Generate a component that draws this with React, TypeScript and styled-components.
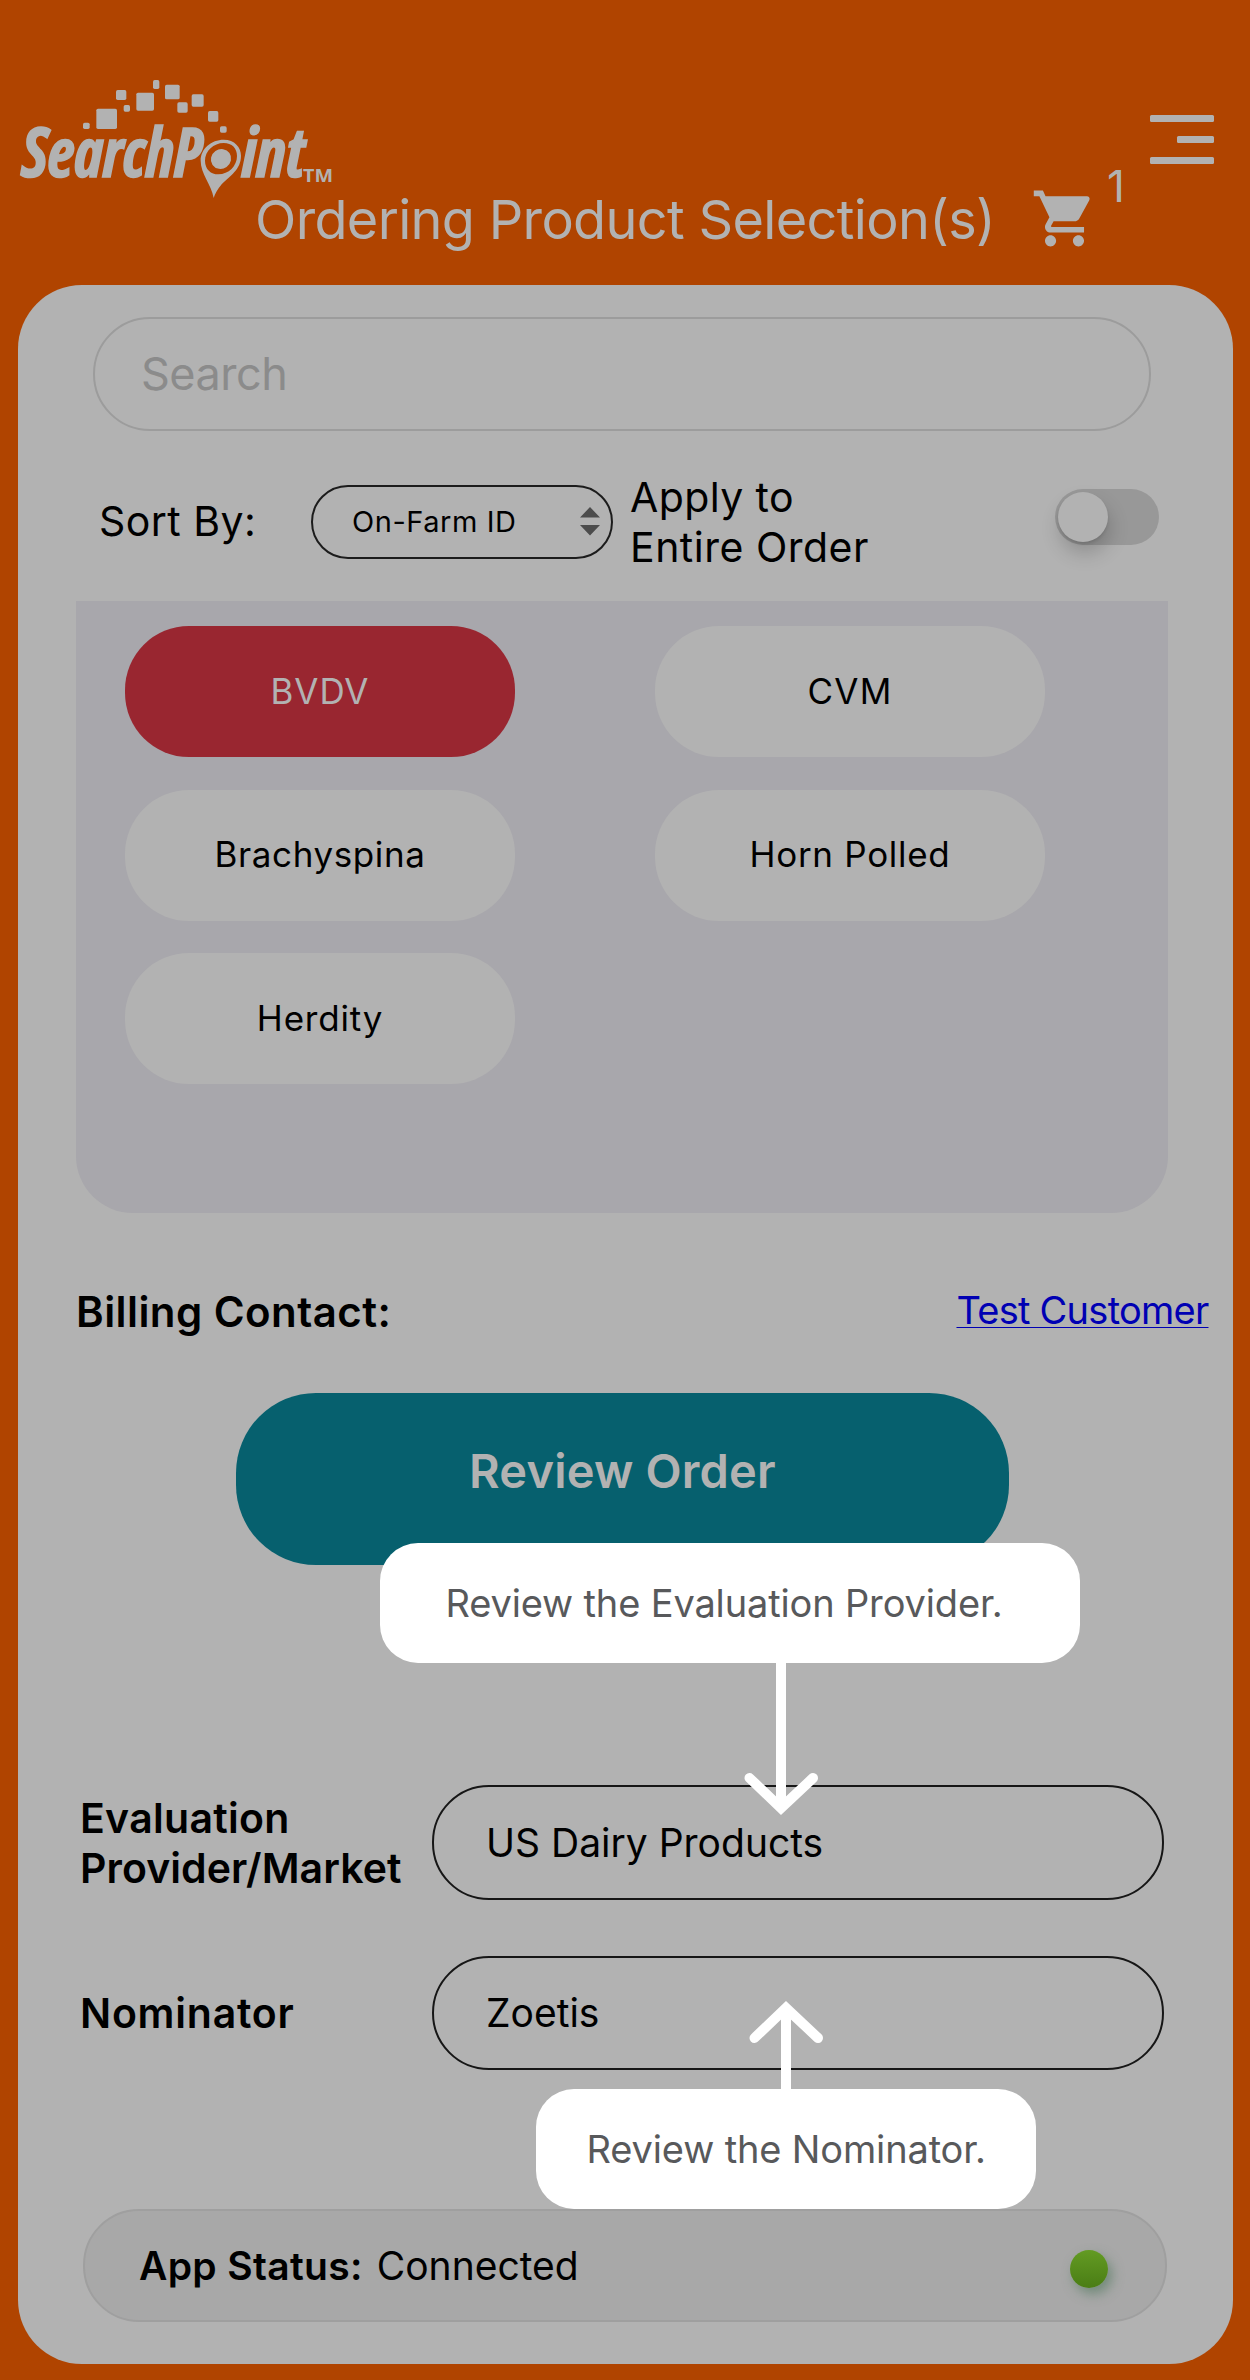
import React from 'react';
import styled, { createGlobalStyle } from 'styled-components';
import { MdShoppingCart } from 'react-icons/md';

const colors = {
  orange: '#b04400',
  surface: '#b2b2b2',
  teal: '#06606e',
  red: '#992630',
  lilac: '#a8a7ac',
  link: '#0000b3',
};

const GlobalStyle = createGlobalStyle`
  *, *::before, *::after { box-sizing: border-box; }
  body { margin: 0; background: ${colors.orange}; }
`;

const Screen = styled.div`
  position: relative;
  display: flex;
  flex-direction: column;
  width: 1250px;
  height: 2380px;
  overflow: hidden;
  background: ${colors.orange};
  color: #000;
  font-family: Inter, 'Liberation Sans', sans-serif;
`;

const Label = styled.span<{ $size: number; $weight?: number; $track?: number; $line?: number }>`
  font-size: ${p => p.$size}px;
  font-weight: ${p => p.$weight ?? 400};
  letter-spacing: ${p => p.$track ?? 0}px;
  line-height: ${p => p.$line ?? 50}px;
  white-space: nowrap;
`;

/* ---------- header ---------- */

const Header = styled.header`
  flex: none;
  height: 284.6px;
  padding-top: 60px;
  color: ${colors.surface};
`;

const BrandRow = styled.div`
  display: flex;
  justify-content: space-between;
  align-items: flex-start;
  height: 100px;
  padding-right: 36px;
`;

const Logo = styled.svg`
  flex: none;
  width: 360px;
  height: 160px;
  fill: ${colors.surface};
`;

const Wordmark = styled.text`
  font-family: 'Open Sans', sans-serif;
  font-size: 203px;
  font-stretch: condensed;
  font-style: italic;
  font-weight: 700;
  stroke: ${colors.surface};
  stroke-width: 5px;
`;

const Menu = styled.div`
  display: flex;
  flex-direction: column;
  align-items: flex-end;
  gap: 14px;
  margin-top: 55px;
`;

const MenuBar = styled.i<{ $width: number }>`
  width: ${p => p.$width}px;
  height: 7px;
  border-radius: 1.5px;
  background: ${colors.surface};
`;

const TitleRow = styled.div`
  display: flex;
  align-items: flex-start;
  padding-left: 255px;
`;

const Title = styled.h1`
  width: 775.5px;
  margin: 30px 0 0;
  font-size: 54px;
  font-weight: 400;
  line-height: 60px;
  letter-spacing: -0.66px;
  white-space: nowrap;
`;

const Cart = styled(MdShoppingCart)`
  flex: none;
  width: 67px;
  height: 67px;
  margin-top: 25px;
`;

const Count = styled.span`
  margin-left: 9.5px;
  font-size: 44px;
  font-weight: 400;
  line-height: 52px;
`;

/* ---------- panel ---------- */

const Panel = styled.main`
  flex: none;
  display: flex;
  flex-direction: column;
  align-items: flex-start;
  height: 2079px;
  margin: 0 17.5px;
  padding-top: 32.4px;
  border-radius: 64px;
  background: ${colors.surface};
`;

const SearchBox = styled.div`
  display: flex;
  align-items: center;
  width: 1058px;
  height: 114px;
  margin-left: 75.5px;
  padding-left: 46px;
  border: 2px solid #9c9c9c;
  border-radius: 57px;
  color: #8b8b8b;
`;

const Controls = styled.div`
  display: grid;
  grid-template-columns: 212px 319px 424.5px auto;
  align-items: center;
  height: 170px;
  padding: 12px 0 0 81.5px;
`;

const SortLabel = styled.div`
  display: flex;
  margin-bottom: 2px;
`;

const Select = styled.div`
  display: flex;
  align-items: center;
  justify-content: space-between;
  width: 302px;
  height: 74px;
  padding: 0 11px 0 39px;
  border: 2px solid #1c1c1c;
  border-radius: 37px;
`;

const Stacked = styled.div`
  display: flex;
  flex-direction: column;
`;

const Track = styled.div`
  display: flex;
  width: 104px;
  height: 56px;
  margin-bottom: 10px;
  padding: 3px;
  border-radius: 28px;
  background: #989898;
`;

const Knob = styled.div`
  width: 50px;
  height: 50px;
  border-radius: 50%;
  background: ${colors.surface};
  box-shadow: 0 2px 3px rgba(0, 0, 0, 0.1), 2px 11px 20px rgba(0, 0, 0, 0.2);
`;

const TestGrid = styled.section`
  display: grid;
  grid-template-columns: 390px 390px;
  grid-auto-rows: 131px;
  gap: 32.4px 140px;
  align-content: start;
  width: 1092px;
  height: 612px;
  margin-left: 58.5px;
  padding: 25.4px 0 0 49px;
  border-radius: 0 0 57px 57px;
  background: ${colors.lilac};
`;

const Pill = styled.div<{ $active?: boolean }>`
  display: flex;
  align-items: center;
  justify-content: center;
  padding-bottom: 2px;
  border-radius: 64px;
  background: ${p => (p.$active ? colors.red : colors.surface)};
  color: ${p => (p.$active ? colors.surface : '#000')};
`;

const BillingRow = styled.div`
  display: flex;
  align-items: center;
  justify-content: space-between;
  align-self: stretch;
  height: 50px;
  margin-top: 74px;
  padding: 0 24px 0 58.5px;
`;

const CustomerLink = styled.a`
  margin-bottom: 3px;
  color: ${colors.link};
  font-size: 38px;
  line-height: 50px;
  letter-spacing: -0.75px;
  text-decoration: underline;
  text-decoration-thickness: 1px;
  text-underline-offset: 3px;
  text-decoration-skip-ink: none;
`;

const ReviewButton = styled.div`
  display: flex;
  align-items: center;
  justify-content: center;
  width: 773px;
  height: 172.5px;
  margin: 56px 0 0 218.5px;
  padding-bottom: 17px;
  border-radius: 80px;
  background: ${colors.teal};
  color: ${colors.surface};
`;

const FieldRow = styled.div<{ $top: number }>`
  display: grid;
  grid-template-columns: 352px 732px;
  align-items: center;
  height: 114.5px;
  margin-top: ${p => p.$top}px;
  padding-left: 62.5px;
`;

const FieldName = styled(Stacked)`
  margin-top: 1.5px;
`;

const Field = styled.div`
  display: flex;
  align-items: center;
  align-self: stretch;
  padding-left: 52px;
  border: 2px solid #161616;
  border-radius: 57px;
`;

const StatusBar = styled.footer`
  display: flex;
  align-items: center;
  width: 1084px;
  height: 113px;
  margin: 139px 0 0 65.5px;
  padding: 0 57.5px 0 54px;
  border: 2px solid #9f9f9f;
  border-radius: 56px;
  background: #a8a8a8;
`;

const StatusValue = styled.div`
  display: flex;
  margin-left: 14px;
`;

const StatusDot = styled.i`
  width: 38px;
  height: 38px;
  margin: 6px 0 0 auto;
  border-radius: 50%;
  background: linear-gradient(#639b23, #4a7d15);
  box-shadow: 4px 6px 12px rgba(60, 110, 75, 0.5);
`;

/* ---------- coach marks ---------- */

const Callout = styled.div<{ $x: number; $y: number; $width: number; $inset: number }>`
  position: absolute;
  left: ${p => p.$x}px;
  top: ${p => p.$y}px;
  display: flex;
  align-items: center;
  width: ${p => p.$width}px;
  height: 119.6px;
  padding-left: ${p => p.$inset}px;
  border-radius: 38px;
  background: #fff;
  color: #58595b;
`;

const Arrow = styled.svg<{ $x: number; $y: number }>`
  position: absolute;
  left: ${p => p.$x}px;
  top: ${p => p.$y}px;
  fill: none;
  stroke: #fff;
  stroke-width: 10;
  stroke-linecap: round;
`;

const pixels = [
  [249, 188, 20, 19], [289, 146, 62, 61], [348, 90, 31, 30], [371, 135, 19, 20],
  [409, 98, 53, 54], [459, 60, 19, 27], [495, 74, 44, 44], [532, 127, 31, 31],
  [575, 103, 36, 37], [624, 153, 31, 32], [660, 199, 20, 19],
];

function BrandLogo() {
  return (
    <Logo viewBox="0 0 1080 480">
      {pixels.map(([x, y, w, h]) => (
        <rect key={`${x}-${y}`} x={x} y={y} width={w} height={h} rx={5} />
      ))}
      <Wordmark x={66} y={350} textLength={540} lengthAdjust="spacingAndGlyphs">SearchP</Wordmark>
      <path
        fillRule="evenodd"
        d="M641 414C634 372 602 342 602 302C602 266 634 239 671 239C704 239 723 262 723 287C723 329 690 347 665 373C652 388 645 402 641 414ZM615 302C615 328 633 343 655 343C686 343 711 318 711 288C711 265 696 249 671 249C641 249 615 273 615 302Z"
      />
      <ellipse cx={663} cy={297} rx={31} ry={29} transform="rotate(-35 663 297)" />
      <Wordmark x={725} y={350} textLength={190} lengthAdjust="spacingAndGlyphs">int</Wordmark>
      <text x={909} y={366} fontSize={54} fontFamily="Open Sans" fontWeight={700} textLength={90} lengthAdjust="spacingAndGlyphs">TM</text>
    </Logo>
  );
}

const tests = [
  { name: 'BVDV', track: 0.9, active: true },
  { name: 'CVM', track: 1.3 },
  { name: 'Brachyspina', track: 0.6 },
  { name: 'Horn Polled', track: 0.7 },
  { name: 'Herdity', track: 0.8 },
];

export default function App() {
  return (
    <Screen>
      <GlobalStyle />
      <Header>
        <BrandRow>
          <BrandLogo />
          <Menu>
            <MenuBar $width={64} />
            <MenuBar $width={37} />
            <MenuBar $width={64} />
          </Menu>
        </BrandRow>
        <TitleRow>
          <Title>Ordering Product Selection(s)</Title>
          <Cart />
          <Count>1</Count>
        </TitleRow>
      </Header>

      <Panel>
        <SearchBox>
          <Label $size={45} $track={-0.5}>Search</Label>
        </SearchBox>

        <Controls>
          <SortLabel>
            <Label $size={41} $track={0.45}>Sort By:</Label>
          </SortLabel>
          <Select>
            <Label $size={29} $track={0.55}>On-Farm ID</Label>
            <svg width="20" height="29" fill="#4c4c4c">
              <path d="M10 0L20 10.5H0ZM10 28.5L20 18H0Z" />
            </svg>
          </Select>
          <Stacked>
            <Label $size={41} $track={0.4}>Apply to</Label>
            <Label $size={41} $track={0.5}>Entire Order</Label>
          </Stacked>
          <Track>
            <Knob />
          </Track>
        </Controls>

        <TestGrid>
          {tests.map(t => (
            <Pill key={t.name} $active={t.active}>
              <Label $size={35} $track={t.track}>{t.name}</Label>
            </Pill>
          ))}
        </TestGrid>

        <BillingRow>
          <Label $size={42} $weight={600} $track={0.44}>Billing Contact:</Label>
          <CustomerLink>Test Customer</CustomerLink>
        </BillingRow>

        <ReviewButton>
          <Label $size={47} $weight={600} $track={0.17}>Review Order</Label>
        </ReviewButton>

        <FieldRow $top={220}>
          <FieldName>
            <Label $size={41} $weight={600} $track={0.3}>Evaluation</Label>
            <Label $size={41} $weight={600} $track={0.06}>Provider/Market</Label>
          </FieldName>
          <Field>
            <Label $size={39}>US Dairy Products</Label>
          </Field>
        </FieldRow>
        <FieldRow $top={56}>
          <Label $size={41} $weight={600} $track={0.76}>Nominator</Label>
          <Field>
            <Label $size={39}>Zoetis</Label>
          </Field>
        </FieldRow>

        <StatusBar>
          <Label $size={39} $weight={600} $track={0.33}>App Status:</Label>
          <StatusValue>
            <Label $size={39}>Connected</Label>
          </StatusValue>
          <StatusDot />
        </StatusBar>
      </Panel>

      <Arrow $x={741} $y={1655} width={80} height={165} viewBox="0 0 80 165">
        <path d="M40 0V150M8.5 123L40 153L72 123" />
      </Arrow>
      <Arrow $x={745} $y={1996} width={82} height={100} viewBox="0 0 82 100">
        <path d="M41 100V16M9.5 42L41 12L73 42" />
      </Arrow>
      <Callout $x={380} $y={1543} $width={700} $inset={65.5}>
        <Label $size={38} $track={-0.15}>Review the Evaluation Provider.</Label>
      </Callout>
      <Callout $x={536} $y={2089} $width={500} $inset={50.5}>
        <Label $size={38} $track={-0.14}>Review the Nominator.</Label>
      </Callout>
    </Screen>
  );
}
